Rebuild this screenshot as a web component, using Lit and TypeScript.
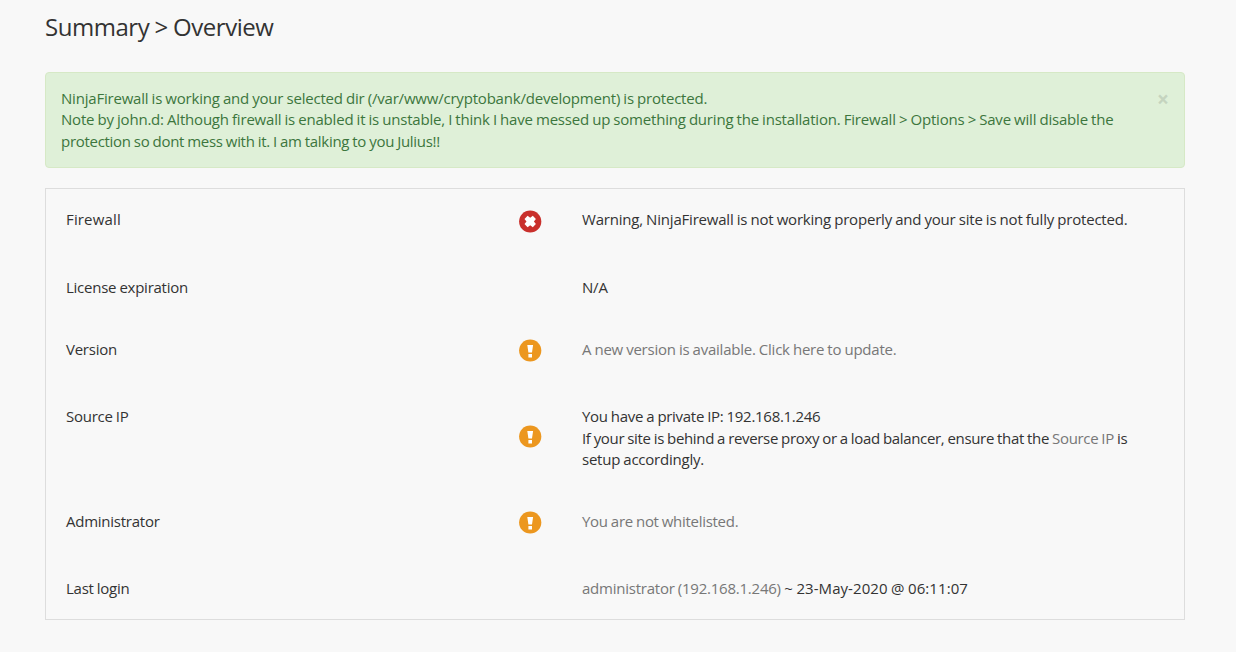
import { LitElement, html, css, svg } from "lit";
import { customElement, property } from "lit/decorators.js";

@customElement("status-icon")
class StatusIcon extends LitElement {
  @property() kind = "";
  static styles = css`
    :host { display: block; width: 23px; height: 23px; }
    svg { display: block; }
  `;
  render() {
    if (!this.kind) return html``;
    const error = this.kind === "error";
    return html`<svg width="23" height="23" viewBox="0 0 23 23">
      <circle cx="11.2" cy="11.5" r="11.1" fill=${error ? "#c9302c" : "#ec971f"}></circle>
      ${error
        ? svg`<path d="M8.6 5.8L11.2 7.8L13.8 5.8L16.9 8.9L14.9 11.5L16.9 14.1L13.8 17.2L11.2 15.2L8.6 17.2L5.5 14.1L7.5 11.5L5.5 8.9Z" fill="#fff"></path>`
        : svg`<path d="M8.3 6h5.8l-1.1 7.6h-3.6zM9.4 15.1h3.6v3.4h-3.6z" fill="#fff"></path>`}
    </svg>`;
  }
}

@customElement("app-root")
class AppRoot extends LitElement {
  static styles = css`
    :host {
      display: block; box-sizing: border-box; height: 652px; padding: 13px 51px 0 45px;
      background: #f8f8f8; color: #333; overflow: hidden;
      font: 15px/21.43px "Open Sans", sans-serif; letter-spacing: -0.2px; word-spacing: -0.5px;
    }
    h1 { margin: 0 0 31px; font-size: 24px; line-height: 28px; font-weight: 400; letter-spacing: -0.46px; }
    .line { display: block; white-space: nowrap; }
    .alert {
      display: grid; grid-template-columns: 1fr 12px; box-sizing: border-box; height: 96px;
      padding: 15px; border: 1px solid #d6e9c6; border-radius: 4px; background: #dff0d8; color: #3c763d;
    }
    .message { min-width: 0; }
    .snug { letter-spacing: -0.23px; }
    .tight { letter-spacing: -0.29px; }
    .tighter { letter-spacing: -0.33px; }
    .loose { letter-spacing: 0.07px; }
    .close { font-size: 21px; font-weight: 700; line-height: 22px; color: #c5d4bf; letter-spacing: 0; }
    .panel {
      display: grid; grid-template-rows: 68px 62px 67px 105px 67px 1fr;
      margin-top: 20px; border: 1px solid #ddd; box-sizing: border-box; height: 432px; padding: 20px 0 0 20px;
    }
    .row { display: grid; grid-template-columns: 453px 63px 1fr; align-items: start; }
    .label { letter-spacing: -0.25px; }
    .row:first-child .label { letter-spacing: 0.15px; }
    .icon { padding-top: 1px; }
    .row:not(:first-child) .icon { padding-top: 0; }
    .row.tall .icon { padding-top: 19px; }
    .tall .value { padding-top: 0.3px; }
    a { color: #777; }
  `;
  row(label: string, kind: string, content: unknown, tall = false) {
    return html`<div class="row ${tall ? "tall" : ""}">
      <span class="label">${label}</span>
      <div class="icon"><status-icon kind=${kind}></status-icon></div>
      <div class="value">${content}</div>
    </div>`;
  }
  render() {
    return html`
      <h1 class="line">Summary &gt; Overview</h1>
      <div class="alert">
        <div class="message">
          <span class="line">NinjaFirewall is working and your selected dir (/var/www/cryptobank/development) is protected.</span>
          <span class="line">Note by john.d: Although firewall is enabled it is unstable, I think I have messed up something during the installation. Firewall &gt; Options &gt; Save will disable the</span>
          <span class="line tight">protection so dont mess with it. I am talking to you Julius!!</span>
        </div>
        <span class="close">×</span>
      </div>
      <div class="panel">
        ${this.row("Firewall", "error", html`<span class="line">Warning, NinjaFirewall is not working properly and your site is not fully protected.</span>`)}
        ${this.row("License expiration", "", html`<span class="line">N/A</span>`)}
        ${this.row("Version", "warning", html`<a class="line snug">A new version is available. Click here to update.</a>`)}
        ${this.row("Source IP", "warning", html`<span class="line tight">You have a private IP: 192.168.1.246</span>
          <span class="line tighter">If your site is behind a reverse proxy or a load balancer, ensure that the <a>Source IP</a> is</span>
          <span class="line snug">setup accordingly.</span>`, true)}
        ${this.row("Administrator", "warning", html`<a class="line tight">You are not whitelisted.</a>`)}
        ${this.row("Last login", "", html`<span class="line loose"><a class="snug">administrator (192.168.1.246)</a> ~ 23-May-2020 @ 06:11:07</span>`)}
      </div>`;
  }
}
